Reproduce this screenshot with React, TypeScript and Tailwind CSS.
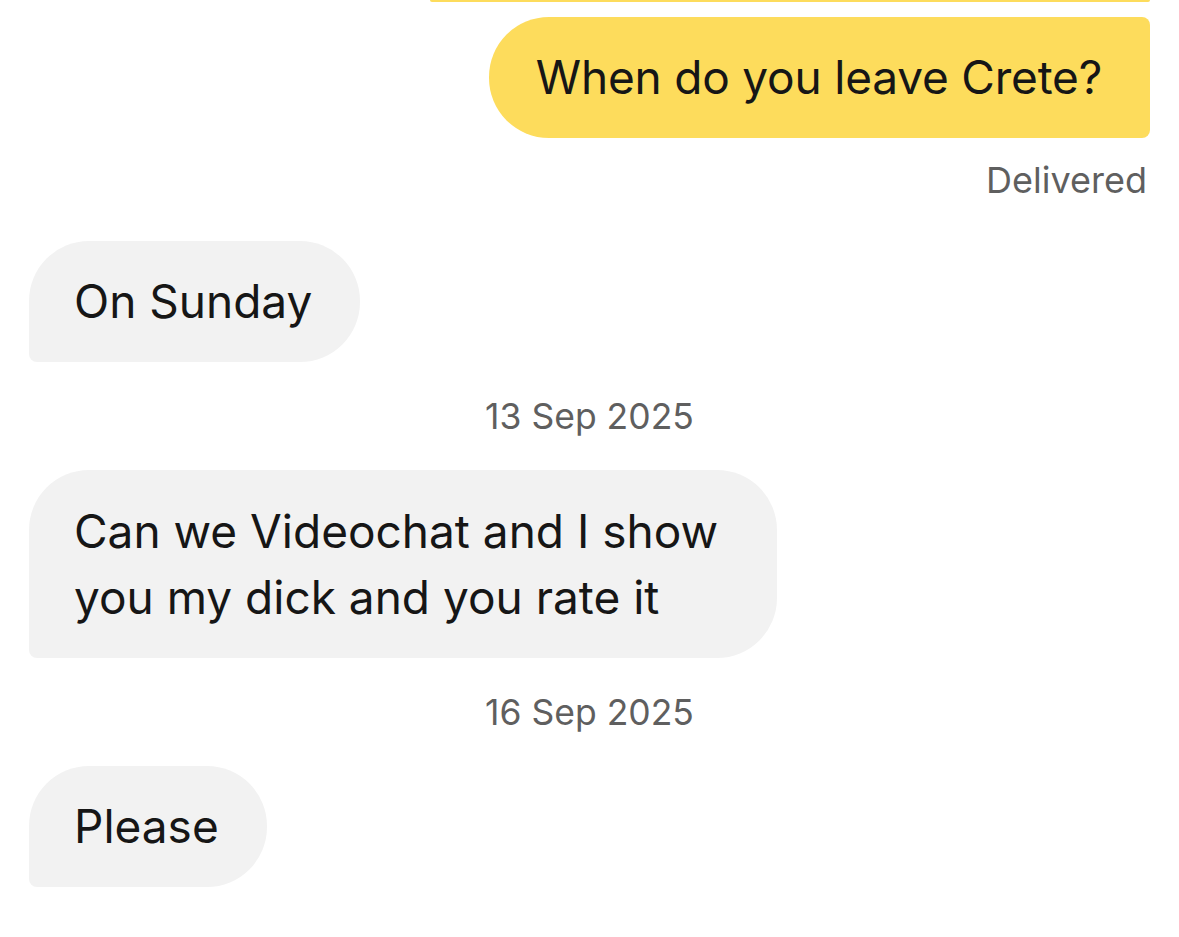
import React from "react";

const font = { fontFamily: "Inter, 'Noto Sans', sans-serif" };

const Theirs = ({ children, className = "" }: { children: React.ReactNode; className?: string }) => (
  <div
    className={`self-start bg-[#f2f2f2] text-[#161616] text-[46px] leading-[65px] rounded-[60px] rounded-bl-[8px] pl-[45px] pr-[48px] py-[28px] ${className}`}
  >
    {children}
  </div>
);

const Stamp = ({ children }: { children: React.ReactNode }) => (
  <div className="self-center text-[35.5px] leading-[40px] text-[#5f5f5f]">{children}</div>
);

export default function App() {
  return (
    <div className="w-[1179px] h-[937px] bg-white overflow-hidden flex flex-col px-[29px]" style={font}>
      {/* tail of the previous bubble */}
      <div className="h-[2px] ml-[401px] bg-[#fddc5c] rounded-b-[8px] shrink-0" />

      <div className="self-end mt-[15px] bg-[#fddc5c] text-[#161616] text-[46px] leading-[65px] rounded-[60px] rounded-tr-[8px] rounded-br-[8px] pl-[47px] pr-[48px] py-[28px] tracking-[-0.2px]">
        When do you leave Crete?
      </div>
      <div className="self-end mt-[22px] text-[36px] leading-[40px] text-[#5f5f5f] pr-[3px]">Delivered</div>

      <div className="mt-[41px] flex flex-col">
        <Theirs>On Sunday</Theirs>
        <div className="mt-[35px] flex flex-col">
          <Stamp>13 Sep 2025</Stamp>
        </div>
        <Theirs className="mt-[33px] w-[748px] leading-[66px] py-[27.5px]">
          Can we Videochat and I show
          <br />
          you my dick and you rate it
        </Theirs>
        <div className="mt-[35px] flex flex-col">
          <Stamp>16 Sep 2025</Stamp>
        </div>
        <Theirs className="mt-[33px]">Please</Theirs>
      </div>
    </div>
  );
}
